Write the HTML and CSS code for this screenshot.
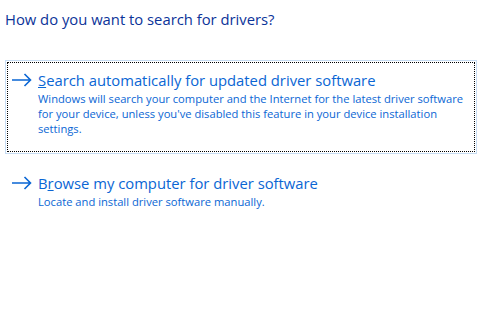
FILE: index.html
```html
<!DOCTYPE html>
<html lang="en">
<head>
    <meta charset="UTF-8">
    <title>Update Drivers</title>
    <link rel="stylesheet" href="styles.css">
</head>
<body>
    <div class="wizard">
        <h1 class="heading">How do you want to search for drivers?</h1>

        <div class="choice choice-focused">
            <div class="choice-inner">
                <svg class="arrow" width="20" height="14" viewBox="0 0 20 14">
                    <path d="M0 7H18.5M12.5 1L18.5 7L12.5 13" fill="none" stroke="#0a66d4" stroke-width="1.6"/>
                </svg>
                <div class="choice-text">
                    <div class="choice-title"><u>S</u>earch automatically for updated driver software</div>
                    <div class="choice-desc">Windows will search your computer and the Internet for the latest driver software for your device, unless you've disabled this feature in your device installation settings.</div>
                </div>
            </div>
        </div>

        <div class="choice">
            <div class="choice-inner">
                <svg class="arrow" width="20" height="14" viewBox="0 0 20 14">
                    <path d="M0 7H18.5M12.5 1L18.5 7L12.5 13" fill="none" stroke="#0a66d4" stroke-width="1.6"/>
                </svg>
                <div class="choice-text">
                    <div class="choice-title">B<u>r</u>owse my computer for driver software</div>
                    <div class="choice-desc">Locate and install driver software manually.</div>
                </div>
            </div>
        </div>
    </div>
</body>
</html>
```

FILE: styles.css
```css
body {
    margin: 0;
    background-color: #ffffff;
    font-family: 'Open Sans', 'Noto Sans', sans-serif;
}

.wizard {
    padding: 8px 5px;
}

.heading {
    margin: 0 0 30px 0;
    font-size: 14.8px;
    font-weight: normal;
    color: #0b3399;
    line-height: 22px;
}

.choice {
    width: 468px;
    border: 1px solid transparent;
    padding: 1px;
}

.choice-focused {
    border-color: #c6dcf3;
}

.choice-inner {
    display: flex;
    align-items: flex-start;
    border: 1px dotted #000000;
    padding: 6px 10px 15px 4px;
}

.choice + .choice {
    margin-top: 9px;
}

.choice:not(.choice-focused) .choice-inner {
    border-color: transparent;
}

.arrow {
    flex: none;
    margin-top: 4px;
    margin-right: 6px;
}

.choice-title {
    font-size: 14.8px;
    line-height: 22px;
    color: #0a66d4;
}

.choice-desc {
    font-size: 11.2px;
    line-height: 15px;
    color: #0a66d4;
}
```
